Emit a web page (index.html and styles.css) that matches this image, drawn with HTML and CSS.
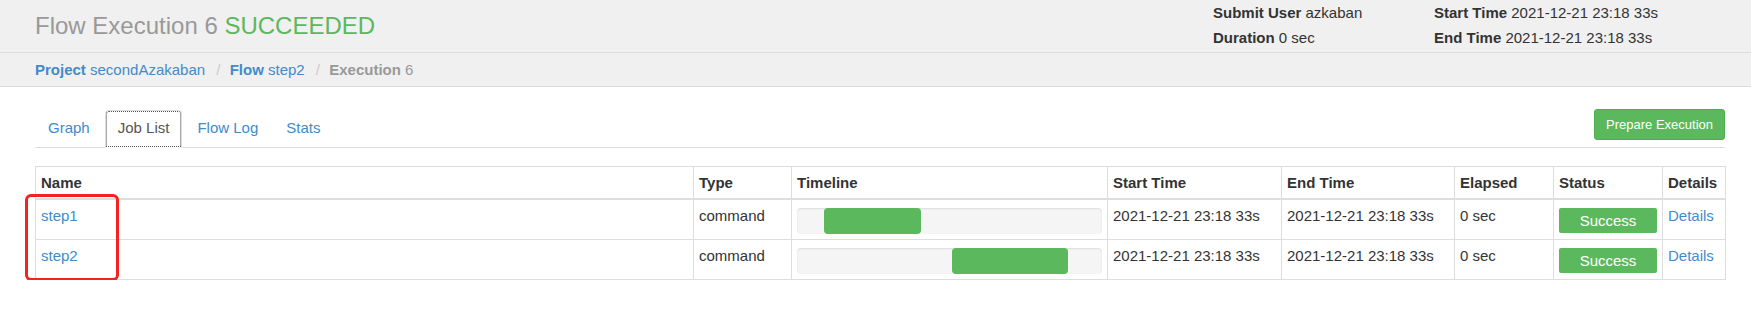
FILE: index.html
```html
<!DOCTYPE html>
<html lang="en">
<head>
  <meta charset="UTF-8" />
  <meta name="viewport" content="width=device-width, initial-scale=1.0"/>
  <title>Flow Execution 6</title>
  <link rel="stylesheet" href="styles.css">
</head>
<body>
  <!-- Page header -->
  <header class="page-header">
    <h1 class="title">Flow Execution 6 <span class="succeeded">SUCCEEDED</span></h1>
    <div class="exec-info">
      <div><b>Submit User</b> azkaban</div>
      <div><b>Start Time</b> 2021-12-21 23:18 33s</div>
      <div><b>Duration</b> 0 sec</div>
      <div><b>End Time</b> 2021-12-21 23:18 33s</div>
    </div>
  </header>

  <!-- Breadcrumb -->
  <nav class="crumbs">
    <a href="#"><b>Project</b> secondAzakaban</a>
    <span class="sep">/</span>
    <a href="#"><b>Flow</b> step2</a>
    <span class="sep">/</span>
    <span class="current"><b>Execution</b> 6</span>
  </nav>

  <section class="content">
    <div class="tabbar">
      <ul class="tabs">
        <li><a href="#">Graph</a></li>
        <li class="active"><a href="#">Job List</a></li>
        <li><a href="#">Flow Log</a></li>
        <li><a href="#">Stats</a></li>
      </ul>
      <button class="btn-prepare">Prepare Execution</button>
    </div>

    <div class="table-wrap">
      <table class="job-table">
        <colgroup>
          <col style="width:658px">
          <col style="width:98px">
          <col style="width:316px">
          <col style="width:174px">
          <col style="width:173px">
          <col style="width:99px">
          <col style="width:109px">
          <col style="width:63px">
        </colgroup>
        <thead>
          <tr>
            <th>Name</th>
            <th>Type</th>
            <th>Timeline</th>
            <th>Start Time</th>
            <th>End Time</th>
            <th>Elapsed</th>
            <th>Status</th>
            <th>Details</th>
          </tr>
        </thead>
        <tbody>
          <tr>
            <td><a href="#">step1</a></td>
            <td>command</td>
            <td><div class="progress"><div class="bar" style="margin-left:8.7%;width:32.1%"></div></div></td>
            <td>2021-12-21 23:18 33s</td>
            <td>2021-12-21 23:18 33s</td>
            <td>0 sec</td>
            <td><div class="status">Success</div></td>
            <td><a href="#">Details</a></td>
          </tr>
          <tr>
            <td><a href="#">step2</a></td>
            <td>command</td>
            <td><div class="progress"><div class="bar" style="margin-left:50.8%;width:38%"></div></div></td>
            <td>2021-12-21 23:18 33s</td>
            <td>2021-12-21 23:18 33s</td>
            <td>0 sec</td>
            <td><div class="status">Success</div></td>
            <td><a href="#">Details</a></td>
          </tr>
        </tbody>
      </table>
      <!-- annotation drawn over the name column -->
      <div class="highlight"></div>
    </div>
  </section>
</body>
</html>
```

FILE: styles.css
```css
body {
  margin: 0;
  font-family: "Liberation Sans", Arial, sans-serif;
  font-size: 15px;
  line-height: 22px;
  color: #333;
  background: #fff;
}

a {
  color: #428bca;
  text-decoration: none;
}

/* Header */
.page-header {
  display: flex;
  height: 52px;
  padding: 0 26px 0 35px;
  background: #f0f0f0;
  border-bottom: 1px solid #dcdcdc;
}

.title {
  flex: 1;
  margin: 11px 0 0;
  font-size: 24px;
  line-height: 30px;
  font-weight: normal;
  color: #999;
}

.succeeded {
  color: #5cb85c;
}

.exec-info {
  display: grid;
  grid-template-columns: 221px 1fr;
  width: 512px;
  margin-top: 2px;
  line-height: 22.5px;
}

.exec-info b {
  color: #333;
}

/* Breadcrumb */
.crumbs {
  height: 33px;
  padding: 0 35px;
  line-height: 33px;
  background: #f0f0f0;
  border-bottom: 1px solid #dcdcdc;
}

.crumbs .sep {
  color: #ccc;
  padding: 0 5px 0 7px;
}

.crumbs .current {
  color: #999;
}

/* Tabs */
.content {
  padding: 23px 26px 0 35px;
}

.tabbar {
  display: flex;
  justify-content: space-between;
  align-items: flex-start;
  border-bottom: 1px solid #ddd;
}

.tabs {
  display: flex;
  margin: 0;
  padding: 0;
  list-style: none;
}

.tabs li {
  margin: 0 2px -1px 0;
}

.tabs a {
  display: block;
  padding: 7px 12px 9px;
  line-height: 20px;
  border: 1px solid transparent;
  border-radius: 4px 4px 0 0;
}

.tabs .active a {
  color: #555;
  background: #fff;
  border-color: #ddd #ddd transparent;
  outline: 1px dotted #555;
  outline-offset: -2px;
}

.btn-prepare {
  margin-top: -1px;
  padding: 5px 11px;
  font-family: inherit;
  font-size: 13px;
  line-height: 19px;
  color: #fff;
  background: #5cb85c;
  border: 1px solid #4cae4c;
  border-radius: 3px;
}

/* Job table */
.table-wrap {
  position: relative;
  margin-top: 18px;
}

.job-table {
  width: 1690px;
  table-layout: fixed;
  border-collapse: collapse;
  border: 1px solid #ddd;
}

.job-table th,
.job-table td {
  padding: 5px;
  line-height: 21px;
  text-align: left;
  vertical-align: top;
  border: 1px solid #ddd;
  white-space: nowrap;
}

.job-table thead th {
  vertical-align: bottom;
  border-bottom-width: 2px;
}

.progress {
  display: flex;
  height: 26px;
  margin-top: 3px;
  background: #f5f5f5;
  border-radius: 4px;
  box-shadow: inset 0 1px 2px rgba(0,0,0,0.1);
}

.bar {
  height: 100%;
  background: #5cb85c;
  border-radius: 4px;
}

.status {
  height: 25px;
  margin-top: 3px;
  line-height: 25px;
  text-align: center;
  color: #fff;
  background: #5cb85c;
  border-radius: 2px;
}

.highlight {
  position: absolute;
  left: -10px;
  top: 28px;
  width: 94px;
  height: 87px;
  box-sizing: border-box;
  border: 3px solid #f52222;
  border-radius: 6px;
}
```
